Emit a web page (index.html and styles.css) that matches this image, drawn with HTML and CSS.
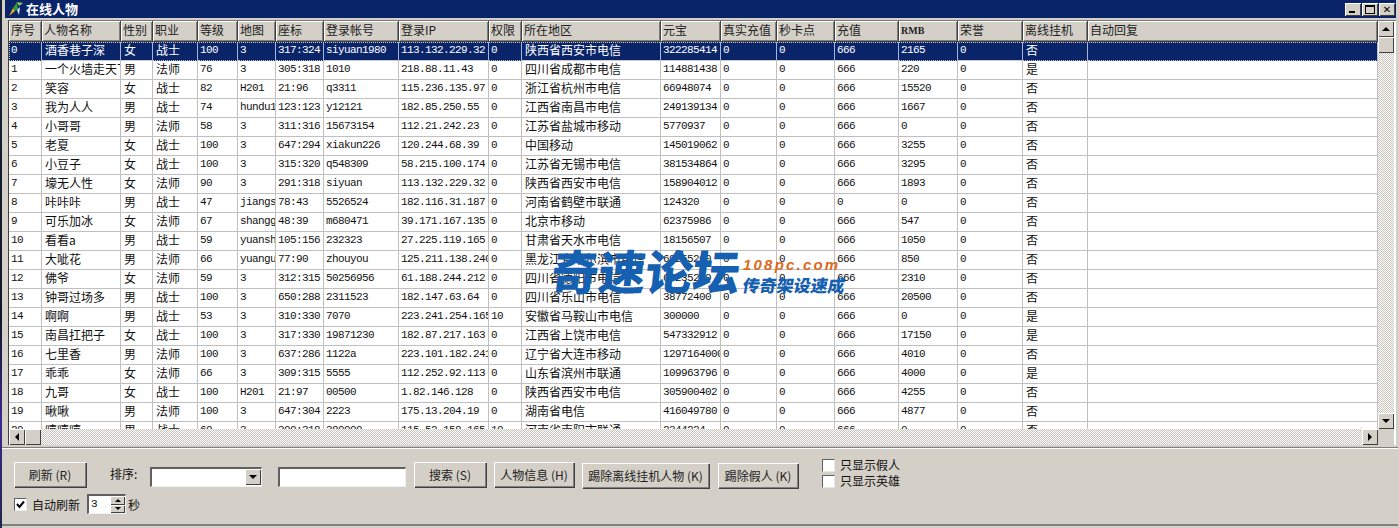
FILE: index.html
```html
<!DOCTYPE html>
<html>

<head>
  <meta charset="utf-8">
  <title>在线人物</title>
  <link rel="stylesheet" href="styles.css">
</head>

<body>
  <div class="window">
    <div class="titlebar">
      <svg class="app-icon" width="16" height="16" viewBox="0 0 16 16">
        <path d="M1 15 L5 7 L7 10 Z" fill="#e8b020"/>
        <path d="M5 7 L9 1 L10 8 L7 10 Z" fill="#2f9a3c"/>
        <path d="M9 1 L15 2 L11 5 Z" fill="#8fd060"/>
        <path d="M9 9 L12 6 L11 14 Z" fill="#d8e8f0"/>
      </svg>
      <span class="title-text">在线人物</span>
      <div class="win-buttons">
        <span class="win-btn"><i class="glyph-min"></i></span>
        <span class="win-btn"><i class="glyph-max"></i></span>
        <span class="win-btn win-close">✕</span>
      </div>
    </div>

    <div class="list">
      <div class="viewport">
        <table class="grid">
          <thead>
            <tr>
              <th class="c-id">序号</th><th class="c-name">人物名称</th><th class="c-sex">性别</th><th class="c-job">职业</th><th class="c-lvl">等级</th><th class="c-map">地图</th><th class="c-pos">座标</th><th class="c-acc">登录帐号</th><th class="c-ip">登录IP</th><th class="c-perm">权限</th><th class="c-area">所在地区</th><th class="c-gold">元宝</th><th class="c-real">真实充值</th><th class="c-card">秒卡点</th><th class="c-pay">充值</th><th class="c-rmb"><b>RMB</b></th><th class="c-hon">荣誉</th><th class="c-off">离线挂机</th><th class="c-auto">自动回复</th>
            </tr>
          </thead>
          <tbody>
            <tr class="selected"><td>0</td><td>酒香巷子深</td><td>女</td><td>战士</td><td>100</td><td>3</td><td>317:324</td><td>siyuan1980</td><td>113.132.229.32</td><td>0</td><td>陕西省西安市电信</td><td>322285414</td><td>0</td><td>0</td><td>666</td><td>2165</td><td>0</td><td>否</td><td></td></tr>
            <tr><td>1</td><td>一个火墙走天下</td><td>男</td><td>法师</td><td>76</td><td>3</td><td>305:318</td><td>1010</td><td>218.88.11.43</td><td>0</td><td>四川省成都市电信</td><td>114881438</td><td>0</td><td>0</td><td>666</td><td>220</td><td>0</td><td>是</td><td></td></tr>
            <tr><td>2</td><td>笑容</td><td>女</td><td>战士</td><td>82</td><td>H201</td><td>21:96</td><td>q3311</td><td>115.236.135.97</td><td>0</td><td>浙江省杭州市电信</td><td>66948074</td><td>0</td><td>0</td><td>666</td><td>15520</td><td>0</td><td>否</td><td></td></tr>
            <tr><td>3</td><td>我为人人</td><td>男</td><td>战士</td><td>74</td><td>hundu1</td><td>123:123</td><td>y12121</td><td>182.85.250.55</td><td>0</td><td>江西省南昌市电信</td><td>249139134</td><td>0</td><td>0</td><td>666</td><td>1667</td><td>0</td><td>否</td><td></td></tr>
            <tr><td>4</td><td>小哥哥</td><td>男</td><td>法师</td><td>58</td><td>3</td><td>311:316</td><td>15673154</td><td>112.21.242.23</td><td>0</td><td>江苏省盐城市移动</td><td>5770937</td><td>0</td><td>0</td><td>666</td><td>0</td><td>0</td><td>否</td><td></td></tr>
            <tr><td>5</td><td>老夏</td><td>女</td><td>战士</td><td>100</td><td>3</td><td>647:294</td><td>xiakun226</td><td>120.244.68.39</td><td>0</td><td>中国移动</td><td>145019062</td><td>0</td><td>0</td><td>666</td><td>3255</td><td>0</td><td>否</td><td></td></tr>
            <tr><td>6</td><td>小豆子</td><td>女</td><td>战士</td><td>100</td><td>3</td><td>315:320</td><td>q548309</td><td>58.215.100.174</td><td>0</td><td>江苏省无锡市电信</td><td>381534864</td><td>0</td><td>0</td><td>666</td><td>3295</td><td>0</td><td>否</td><td></td></tr>
            <tr><td>7</td><td>壕无人性</td><td>女</td><td>法师</td><td>90</td><td>3</td><td>291:318</td><td>siyuan</td><td>113.132.229.32</td><td>0</td><td>陕西省西安市电信</td><td>158904012</td><td>0</td><td>0</td><td>666</td><td>1893</td><td>0</td><td>否</td><td></td></tr>
            <tr><td>8</td><td>咔咔咔</td><td>男</td><td>战士</td><td>47</td><td>jiangshan</td><td>78:43</td><td>5526524</td><td>182.116.31.187</td><td>0</td><td>河南省鹤壁市联通</td><td>124320</td><td>0</td><td>0</td><td>0</td><td>0</td><td>0</td><td>否</td><td></td></tr>
            <tr><td>9</td><td>可乐加冰</td><td>女</td><td>法师</td><td>67</td><td>shanggu</td><td>48:39</td><td>m680471</td><td>39.171.167.135</td><td>0</td><td>北京市移动</td><td>62375986</td><td>0</td><td>0</td><td>666</td><td>547</td><td>0</td><td>否</td><td></td></tr>
            <tr><td>10</td><td>看看a</td><td>男</td><td>战士</td><td>59</td><td>yuanshan</td><td>105:156</td><td>232323</td><td>27.225.119.165</td><td>0</td><td>甘肃省天水市电信</td><td>18156507</td><td>0</td><td>0</td><td>666</td><td>1050</td><td>0</td><td>否</td><td></td></tr>
            <tr><td>11</td><td>大呲花</td><td>男</td><td>法师</td><td>66</td><td>yuangu</td><td>77:90</td><td>zhouyou</td><td>125.211.138.240</td><td>0</td><td>黑龙江省哈尔滨市电信</td><td>69255200</td><td>0</td><td>0</td><td>666</td><td>850</td><td>0</td><td>否</td><td></td></tr>
            <tr><td>12</td><td>佛爷</td><td>女</td><td>法师</td><td>59</td><td>3</td><td>312:315</td><td>50256956</td><td>61.188.244.212</td><td>0</td><td>四川省德阳市电信</td><td>68235200</td><td>0</td><td>0</td><td>666</td><td>2310</td><td>0</td><td>否</td><td></td></tr>
            <tr><td>13</td><td>钟哥过场多</td><td>男</td><td>战士</td><td>100</td><td>3</td><td>650:288</td><td>2311523</td><td>182.147.63.64</td><td>0</td><td>四川省乐山市电信</td><td>38772400</td><td>0</td><td>0</td><td>666</td><td>20500</td><td>0</td><td>否</td><td></td></tr>
            <tr><td>14</td><td>啊啊</td><td>男</td><td>战士</td><td>53</td><td>3</td><td>310:330</td><td>7070</td><td>223.241.254.165</td><td>10</td><td>安徽省马鞍山市电信</td><td>300000</td><td>0</td><td>0</td><td>666</td><td>0</td><td>0</td><td>是</td><td></td></tr>
            <tr><td>15</td><td>南昌扛把子</td><td>女</td><td>战士</td><td>100</td><td>3</td><td>317:330</td><td>19871230</td><td>182.87.217.163</td><td>0</td><td>江西省上饶市电信</td><td>547332912</td><td>0</td><td>0</td><td>666</td><td>17150</td><td>0</td><td>是</td><td></td></tr>
            <tr><td>16</td><td>七里香</td><td>男</td><td>法师</td><td>100</td><td>3</td><td>637:286</td><td>1122a</td><td>223.101.182.241</td><td>0</td><td>辽宁省大连市移动</td><td>1297164000</td><td>0</td><td>0</td><td>666</td><td>4010</td><td>0</td><td>否</td><td></td></tr>
            <tr><td>17</td><td>乖乖</td><td>女</td><td>法师</td><td>66</td><td>3</td><td>309:315</td><td>5555</td><td>112.252.92.113</td><td>0</td><td>山东省滨州市联通</td><td>109963796</td><td>0</td><td>0</td><td>666</td><td>4000</td><td>0</td><td>是</td><td></td></tr>
            <tr><td>18</td><td>九哥</td><td>女</td><td>战士</td><td>100</td><td>H201</td><td>21:97</td><td>00500</td><td>1.82.146.128</td><td>0</td><td>陕西省西安市电信</td><td>305900402</td><td>0</td><td>0</td><td>666</td><td>4255</td><td>0</td><td>否</td><td></td></tr>
            <tr><td>19</td><td>啾啾</td><td>男</td><td>法师</td><td>100</td><td>3</td><td>647:304</td><td>2223</td><td>175.13.204.19</td><td>0</td><td>湖南省电信</td><td>416049780</td><td>0</td><td>0</td><td>666</td><td>4877</td><td>0</td><td>否</td><td></td></tr>
            <tr><td>20</td><td>嘻嘻嘻</td><td>男</td><td>战士</td><td>60</td><td>3</td><td>300:318</td><td>380000</td><td>115.52.158.165</td><td>10</td><td>河南省南阳市联通</td><td>2344224</td><td>0</td><td>0</td><td>666</td><td>0</td><td>0</td><td>否</td><td></td></tr>
          </tbody>
        </table>
      </div>

      <div class="vscroll">
        <span class="sb-btn"><i class="arrow-up"></i></span>
        <span class="sb-thumb"></span>
        <span class="sb-track"></span>
        <span class="sb-btn"><i class="arrow-down"></i></span>
      </div>
      <div class="hscroll">
        <span class="sb-btn"><i class="arrow-left"></i></span>
        <span class="sb-thumb"></span>
        <span class="sb-track"></span>
        <span class="sb-btn"><i class="arrow-right"></i></span>
      </div>
      <div class="corner"></div>

      <div class="watermark">
        <span class="wm-big">奇速论坛</span>
        <div class="wm-side">
          <span class="wm-url">108pc.com</span>
          <span class="wm-sub">传奇架设速成</span>
        </div>
      </div>
    </div>

    <div class="panel">
      <div class="tools">
        <button class="btn btn-refresh">刷新 (R)</button>
        <span class="sort-label">排序:</span>
        <div class="combo"><span class="sb-btn"><i class="arrow-down"></i></span></div>
        <div class="field search-field"></div>
        <button class="btn btn-search">搜索 (S)</button>
        <button class="btn btn-info">人物信息 (H)</button>
        <button class="btn btn-low btn-kick-idle">踢除离线挂机人物 (K)</button>
        <button class="btn btn-low btn-kick-fake">踢除假人 (K)</button>
        <div class="filters">
          <div class="check-row"><span class="check"></span>只显示假人</div>
          <div class="check-row"><span class="check"></span>只显示英雄</div>
        </div>
      </div>
      <div class="auto-row">
        <span class="check checked">
          <svg width="9" height="9" viewBox="0 0 9 9"><path d="M1 4 L3.5 7 L8 1.5" fill="none" stroke="#000" stroke-width="2"/></svg>
        </span>
        <span class="auto-label">自动刷新</span>
        <div class="field spin">
          <span class="spin-value">3</span>
          <div class="spin-btns">
            <span class="sb-btn"><i class="arrow-up"></i></span>
            <span class="sb-btn"><i class="arrow-down"></i></span>
          </div>
        </div>
        <span class="sec-label">秒</span>
      </div>
    </div>
  </div>
</body>
</html>
```

FILE: styles.css
```css
html, body {
  margin: 0;
  padding: 0;
}

/* the strip on the left is the desktop showing behind the window */
body {
  width: 1399px;
  height: 528px;
  overflow: hidden;
  background: linear-gradient(#1a2238, #101828 60%, #3a2a90 80%, #20284a) 0 0 / 2px 100% no-repeat, #d4d0c8;
  font-family: "Noto Sans CJK SC", "Liberation Sans", sans-serif;
  font-size: 12px;
  color: #111;
}

.window {
  height: 528px;
  box-sizing: border-box;
  padding: 0 3px 2px 5px;
  display: flex;
  flex-direction: column;
}

/* title bar */
.titlebar {
  height: 18px;
  flex: none;
  background: #0a246a;
  color: #fff;
  display: flex;
  align-items: center;
}

.app-icon {
  margin: 0 2px 0 3px;
}

.title-text {
  font-size: 13px;
  font-weight: 700;
  line-height: 18px;
}

.win-buttons {
  margin-left: auto;
  margin-right: 1px;
  display: flex;
}

.win-btn {
  width: 16px;
  height: 13px;
  box-sizing: border-box;
  margin-left: 1px;
  background: #d4d0c8;
  box-shadow: inset 1px 1px #fff, inset -1px -1px #404040;
  color: #000;
  display: flex;
  align-items: center;
  justify-content: center;
  position: relative;
}

.win-close {
  font-size: 10px;
  font-weight: 700;
  line-height: 13px;
  font-family: "DejaVu Sans", sans-serif;
}

.glyph-min {
  width: 6px;
  height: 2px;
  background: #000;
  margin-top: 6px;
  margin-right: 3px;
}

.glyph-max {
  width: 10px;
  height: 9px;
  box-sizing: border-box;
  border: 1px solid #000;
  border-top-width: 2px;
}

/* list view */
.list {
  margin: 2px 0 0 3px;
  height: 425px;
  flex: none;
  box-sizing: border-box;
  display: grid;
  grid-template-columns: 1369px 16px;
  grid-template-rows: 408px 16px;
  background: #fff;
  border-left: 1px solid #404040;
  border-top: 1px solid #777;
  position: relative;
}

.viewport {
  overflow: hidden;
  background: #fff;
}

.grid {
  table-layout: fixed;
  width: 1369px;
  border-collapse: separate;
  border-spacing: 0;
  font-family: "Liberation Mono", "Noto Sans CJK SC", monospace;
  font-size: 11px;
}

.grid th {
  height: 19px;
  box-sizing: border-box;
  padding: 0 0 2px 2px;
  background: #d4d0c8;
  border-right: 1px solid #404040;
  border-bottom: 1px solid #404040;
  box-shadow: inset 1px 1px #fff, inset -1px -1px #808080;
  font-family: "Noto Sans CJK SC", sans-serif;
  font-size: 12px;
  font-weight: 400;
  text-align: left;
  line-height: 16px;
  white-space: nowrap;
  overflow: hidden;
  color: #222;
}

.grid th b {
  font-family: "Liberation Serif", serif;
  font-size: 10px;
}

.c-id { width: 33px; }
.c-name { width: 79px; }
.c-sex { width: 32px; }
.c-job { width: 45px; }
.c-lvl { width: 40px; }
.c-map { width: 38px; }
.c-pos { width: 48px; }
.c-acc { width: 75px; }
.c-ip { width: 90px; }
.c-perm { width: 33px; }
.c-area { width: 139px; }
.c-gold { width: 60px; }
.c-real { width: 56px; }
.c-card { width: 58px; }
.c-pay { width: 64px; }
.c-rmb { width: 59px; }
.c-hon { width: 65px; }
.c-off { width: 65px; }
.c-auto { width: 290px; }

.grid td {
  height: 19px;
  box-sizing: border-box;
  padding: 0 0 2px 2px;
  border-right: 1px solid #c0c0c0;
  border-bottom: 1px solid #c0c0c0;
  letter-spacing: -0.6px;
  line-height: 16px;
  white-space: nowrap;
  overflow: hidden;
}

/* text columns are full width chinese */
.grid td:nth-child(2),
.grid td:nth-child(3),
.grid td:nth-child(4),
.grid td:nth-child(11),
.grid td:nth-child(18) {
  font-family: "Noto Sans CJK SC", sans-serif;
  font-size: 12px;
  letter-spacing: 0;
  padding-left: 3px;
}

.selected td {
  background: #0a246a;
  color: #fff;
  border-right-color: #a6b4d8;
  border-bottom: 1px dotted #d0d0d0;
  border-top: 0;
}

.selected {
  outline: 1px dotted #c8c8c8;
  outline-offset: -1px;
}

/* scroll bars */
.vscroll {
  display: flex;
  flex-direction: column;
  background: #d4d0c8;
}

.hscroll {
  display: flex;
  background: #d4d0c8;
}

.corner {
  background: #d4d0c8;
}

.sb-btn,
.sb-thumb {
  flex: none;
  width: 16px;
  height: 16px;
  box-sizing: border-box;
  background: #d4d0c8;
  box-shadow: inset 1px 1px #fff, inset -1px -1px #404040;
  display: flex;
  align-items: center;
  justify-content: center;
}

.sb-track {
  flex: 1;
  background: repeating-conic-gradient(#c8c4bc 0 25%, #fff 0 50%) 0 0 / 2px 2px;
}

.arrow-up,
.arrow-down {
  width: 0;
  height: 0;
  border-left: 4px solid transparent;
  border-right: 4px solid transparent;
}

.arrow-up {
  border-bottom: 4px solid #000;
}

.arrow-down {
  border-top: 4px solid #000;
}

.arrow-left,
.arrow-right {
  width: 0;
  height: 0;
  border-top: 4px solid transparent;
  border-bottom: 4px solid transparent;
}

.arrow-left {
  border-right: 4px solid #000;
}

.arrow-right {
  border-left: 4px solid #000;
}

/* site stamp lying over the list */
.watermark {
  position: absolute;
  left: 543px;
  top: 221px;
  display: flex;
  color: #1560b0;
  pointer-events: none;
}

.wm-big {
  font-family: "Noto Sans CJK SC", sans-serif;
  font-size: 47px;
  font-weight: 900;
  line-height: 56px;
  white-space: nowrap;
  transform: skewX(-6deg);
}

.wm-side {
  display: flex;
  flex-direction: column;
  margin-left: 3px;
  padding-top: 15px;
}

.wm-url {
  font-family: "Liberation Sans", sans-serif;
  font-size: 15px;
  font-weight: 700;
  font-style: italic;
  letter-spacing: 2.2px;
  line-height: 16px;
  color: #dc6a1c;
}

.wm-sub {
  font-size: 17px;
  font-weight: 900;
  line-height: 20px;
  margin-top: 2px;
  white-space: nowrap;
  transform: skewX(-10deg);
}

/* bottom panel */
.panel {
  flex: 1;
  margin-top: 2px;
  margin-left: -3px;
  margin-right: -2px;
  box-sizing: border-box;
  border-top: 1px solid #808080;
  border-bottom: 2px solid #808080;
  box-shadow: inset 0 1px #fff;
  padding: 9px 0 0 12px;
}

.tools {
  height: 38px;
  display: flex;
  align-items: flex-start;
}

.btn {
  height: 25px;
  margin-top: 5px;
  padding: 0;
  border: 0;
  background: #d4d0c8;
  box-shadow: inset 1px 1px #fff, inset -1px -1px #808080, 1px 1px #404040;
  font-family: "Noto Sans CJK SC", sans-serif;
  font-size: 12px;
  color: #222;
  white-space: nowrap;
}

.btn-low {
  margin-top: 6px;
}

.btn-refresh { width: 72px; }
.btn-search { width: 72px; margin-left: 8px; }
.btn-info { width: 80px; margin-left: 8px; }
.btn-kick-idle { width: 127px; margin-left: 8px; }
.btn-kick-fake { width: 80px; margin-left: 9px; }

.sort-label {
  width: 40px;
  margin-left: 24px;
  margin-top: 7px;
  line-height: 20px;
}

.field {
  box-sizing: border-box;
  background: #fff;
  border-top: 2px solid #606060;
  border-left: 2px solid #606060;
  border-right: 1px solid #f0f0f0;
  border-bottom: 1px solid #f0f0f0;
}

.combo {
  width: 112px;
  height: 20px;
  margin-top: 10px;
  box-sizing: border-box;
  background: #fff;
  border-top: 2px solid #606060;
  border-left: 2px solid #606060;
  border-right: 1px solid #f0f0f0;
  border-bottom: 1px solid #f0f0f0;
  display: flex;
  justify-content: flex-end;
}

.search-field {
  width: 128px;
  height: 20px;
  margin-top: 10px;
  margin-left: 16px;
}

.filters {
  margin-left: 24px;
  margin-top: 0;
}

.check-row {
  display: flex;
  align-items: center;
  height: 16px;
  line-height: 16px;
}

.check {
  width: 13px;
  height: 13px;
  box-sizing: border-box;
  background: #fff;
  border-top: 1px solid #606060;
  border-left: 1px solid #606060;
  border-right: 1px solid #e8e8e8;
  border-bottom: 1px solid #e8e8e8;
  margin-right: 5px;
  display: flex;
  align-items: center;
  justify-content: center;
  flex: none;
}

.auto-row {
  display: flex;
  align-items: center;
  height: 20px;
  margin-top: -1px;
}

.auto-label {
  width: 55px;
}

.spin {
  width: 39px;
  height: 20px;
  display: flex;
  justify-content: space-between;
}

.spin-value {
  font-family: "Liberation Mono", monospace;
  font-size: 11px;
  line-height: 17px;
  padding-left: 2px;
}

.spin-btns {
  display: flex;
  flex-direction: column;
}

.spin-btns .sb-btn {
  width: 15px;
  height: 8.5px;
}

.spin-btns .arrow-up {
  border-bottom-width: 3px;
  border-left-width: 3px;
  border-right-width: 3px;
}

.spin-btns .arrow-down {
  border-top-width: 3px;
  border-left-width: 3px;
  border-right-width: 3px;
}

.sec-label {
  margin-left: 2px;
}
```
